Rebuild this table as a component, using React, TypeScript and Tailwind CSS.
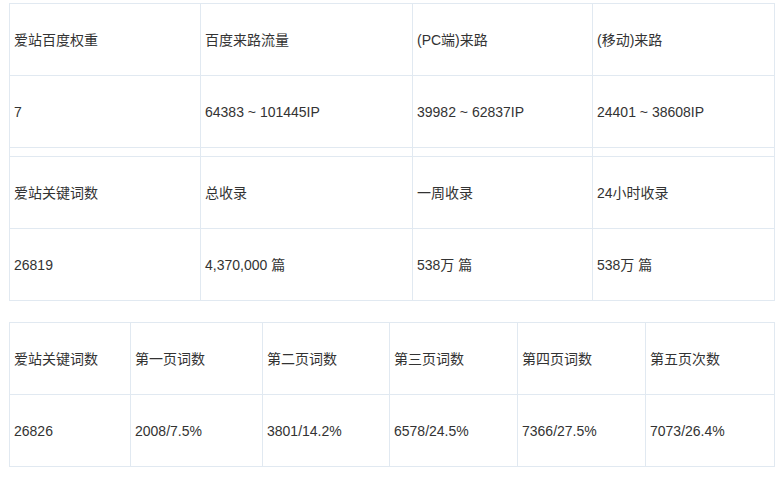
import React from 'react';

const font = { fontFamily: '"Liberation Sans", "Noto Sans CJK SC", sans-serif' };

const Cell = ({ children }: { children?: React.ReactNode }) => (
  <td className="border border-[#e1e9f1] px-[4px] align-middle text-[14px] text-[#333333] leading-[20px]">
    {children}
  </td>
);

const App = () => {
  const top = [
    ['爱站百度权重', '百度来路流量', '(PC端)来路', '(移动)来路'],
    ['7', '64383 ~ 101445IP', '39982 ~ 62837IP', '24401 ~ 38608IP'],
  ];
  const mid = [
    ['爱站关键词数', '总收录', '一周收录', '24小时收录'],
    ['26819', '4,370,000 篇', '538万 篇', '538万 篇'],
  ];
  const pages = [
    ['爱站关键词数', '第一页词数', '第二页词数', '第三页词数', '第四页词数', '第五页次数'],
    ['26826', '2008/7.5%', '3801/14.2%', '6578/24.5%', '7366/27.5%', '7073/26.4%'],
  ];

  return (
    <div className="bg-white w-[782px] h-[478px] pl-[9px] pt-[3px]" style={font}>
      <table className="table-fixed border-collapse w-[765px]">
        <colgroup>
          <col className="w-[191px]" />
          <col className="w-[212px]" />
          <col className="w-[180px]" />
          <col className="w-[182px]" />
        </colgroup>
        <tbody>
          {top.map((row, i) => (
            <tr key={'t' + i} className="h-[72px]">
              {row.map((c) => (
                <Cell key={c}>{c}</Cell>
              ))}
            </tr>
          ))}
          <tr className="h-[9px]">
            <Cell />
            <Cell />
            <Cell />
            <Cell />
          </tr>
          {mid.map((row, i) => (
            <tr key={'m' + i} className="h-[72px]">
              {row.map((c, j) => (
                <Cell key={j}>{c}</Cell>
              ))}
            </tr>
          ))}
        </tbody>
      </table>

      <table className="table-fixed border-collapse w-[765px] mt-[21px]">
        <colgroup>
          <col className="w-[121px]" />
          <col className="w-[132px]" />
          <col className="w-[127px]" />
          <col className="w-[128px]" />
          <col className="w-[128px]" />
          <col className="w-[129px]" />
        </colgroup>
        <tbody>
          {pages.map((row, i) => (
            <tr key={'p' + i} className="h-[72px]">
              {row.map((c, j) => (
                <Cell key={j}>{c}</Cell>
              ))}
            </tr>
          ))}
        </tbody>
      </table>
    </div>
  );
};

export default App;
